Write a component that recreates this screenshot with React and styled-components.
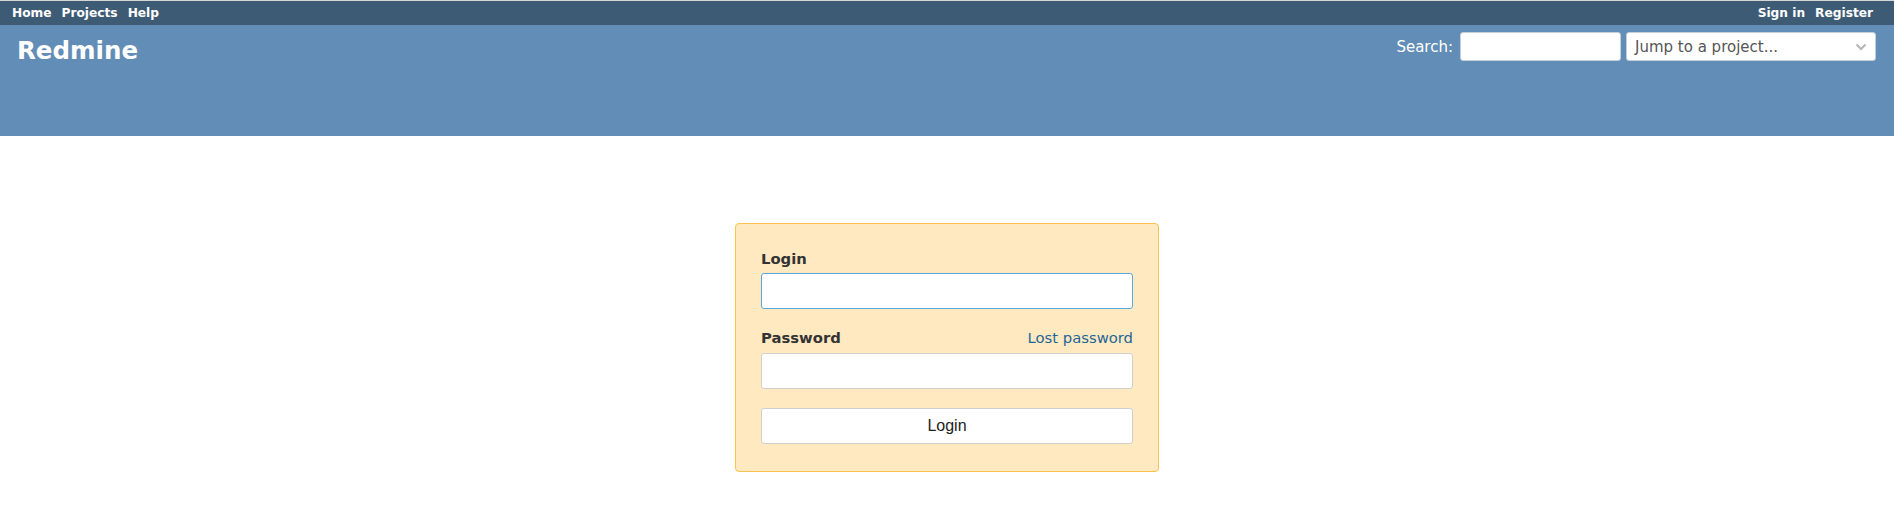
import React, { useState } from "react";
import styled, { createGlobalStyle } from "styled-components";

const GlobalStyle = createGlobalStyle`
  html, body {
    margin: 0;
    padding: 0;
    background: #fff;
    font-family: "DejaVu Sans", Verdana, sans-serif;
    color: #333;
  }
  * {
    box-sizing: border-box;
  }
`;

const TopMenu = styled.div`
  display: flex;
  justify-content: space-between;
  align-items: center;
  height: 25px;
  border-top: 1px solid #d6d6d6;
  background: #3e5b76;
  padding: 0 21px 0 12px;
`;

const MenuList = styled.div`
  display: flex;
  gap: 10px;
`;

const MenuLink = styled.a`
  color: #fff;
  font-weight: bold;
  font-size: 12.2px;
  line-height: 14px;
  text-decoration: none;
  cursor: pointer;
`;

const Header = styled.div`
  display: flex;
  justify-content: space-between;
  align-items: flex-start;
  height: 111px;
  background: #628db6;
  padding: 7px 18px 0 17px;
`;

const Title = styled.h1`
  margin: 2px 0 0;
  padding: 0;
  color: #fff;
  font-size: 24.5px;
  font-weight: bold;
  line-height: 34px;
`;

const QuickSearch = styled.div`
  display: flex;
  align-items: center;
  gap: 5px;
  color: #fff;
  font-size: 15px;
`;

const SearchLabel = styled.label`
  margin-right: 2px;
`;

const SearchInput = styled.input`
  width: 161px;
  height: 29px;
  border: 1px solid #c4cfd9;
  border-radius: 3px;
  background: #fff;
  outline: none;
  padding: 0 6px;
  font-size: 15px;
  font-family: inherit;
`;

const ProjectJump = styled.div`
  display: flex;
  align-items: center;
  justify-content: space-between;
  width: 250px;
  height: 29px;
  border: 1px solid #c4cfd9;
  border-radius: 3px;
  background: #fff;
  color: #555;
  padding: 0 8px 0 8px;
  font-size: 15px;
`;

const Main = styled.div`
  display: flex;
  justify-content: center;
  padding-top: 87px;
`;

const LoginBox = styled.form`
  width: 424px;
  background: #fee9c1;
  border: 1px solid #fbc24f;
  border-radius: 4px;
  padding: 26px 25px 27px 25px;
  display: flex;
  flex-direction: column;
`;

const LabelRow = styled.div`
  display: flex;
  justify-content: space-between;
  align-items: baseline;
  margin-top: ${(p) => p.$top || 0}px;
`;

const Label = styled.label`
  font-weight: bold;
  font-size: 14.8px;
  line-height: 18px;
  color: #333;
`;

const LostLink = styled.a`
  color: #1f6697;
  font-size: 14.8px;
  line-height: 18px;
  text-decoration: none;
  cursor: pointer;
`;

const Field = styled.input`
  width: 372px;
  height: 36px;
  margin-top: ${(p) => p.$top}px;
  border: 1px solid ${(p) => (p.$focused ? "#5aa7dd" : "#cfcfcf")};
  border-radius: 3px;
  background: #fff;
  outline: none;
  padding: 0 8px;
  font-size: 15px;
  font-family: inherit;
`;

const Submit = styled.button`
  width: 372px;
  height: 36px;
  margin-top: 19px;
  border: 1px solid #cfcfcf;
  border-radius: 3px;
  background: #fff;
  color: #222;
  font-family: "Liberation Sans", Arial, sans-serif;
  font-size: 16px;
  cursor: pointer;
`;

function Chevron() {
  return (
    <svg width="12" height="8" viewBox="0 0 12 8">
      <path
        d="M1.5 1.5 L6 6 L10.5 1.5"
        fill="none"
        stroke="#b5b5b5"
        strokeWidth="2"
      />
    </svg>
  );
}

function App() {
  const [login, setLogin] = useState("");
  const [password, setPassword] = useState("");

  return (
    <>
      <GlobalStyle />
      <TopMenu>
        <MenuList>
          <MenuLink>Home</MenuLink>
          <MenuLink>Projects</MenuLink>
          <MenuLink>Help</MenuLink>
        </MenuList>
        <MenuList>
          <MenuLink>Sign in</MenuLink>
          <MenuLink>Register</MenuLink>
        </MenuList>
      </TopMenu>
      <Header>
        <Title>Redmine</Title>
        <QuickSearch>
          <SearchLabel>Search:</SearchLabel>
          <SearchInput />
          <ProjectJump>
            <span>Jump to a project...</span>
            <Chevron />
          </ProjectJump>
        </QuickSearch>
      </Header>
      <Main>
        <LoginBox onSubmit={(e) => e.preventDefault()}>
          <LabelRow>
            <Label>Login</Label>
          </LabelRow>
          <Field
            $top={5}
            $focused
            value={login}
            onChange={(e) => setLogin(e.target.value)}
          />
          <LabelRow $top={20}>
            <Label>Password</Label>
            <LostLink>Lost password</LostLink>
          </LabelRow>
          <Field
            $top={6}
            type="password"
            value={password}
            onChange={(e) => setPassword(e.target.value)}
          />
          <Submit type="submit">Login</Submit>
        </LoginBox>
      </Main>
    </>
  );
}

export default App;
